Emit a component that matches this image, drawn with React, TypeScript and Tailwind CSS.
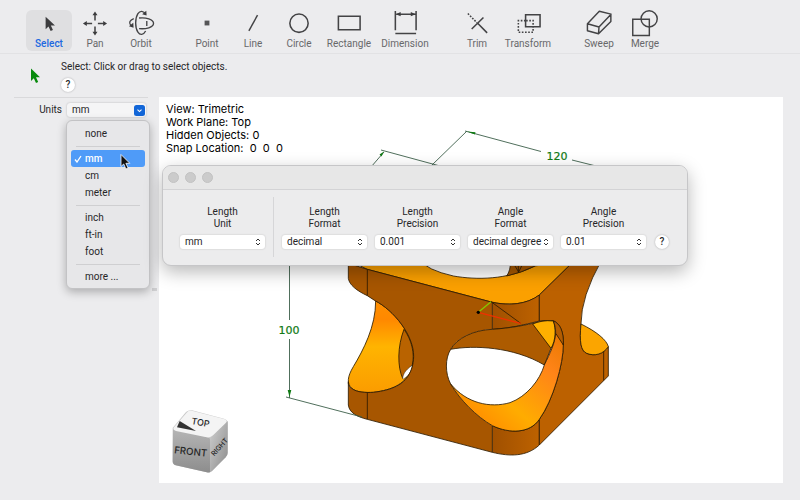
import React from 'react';

const ui = "font-['Roboto','Liberation_Sans',sans-serif]";

type Tool = { name: string; width: string; icon: React.ReactNode; active?: boolean };

const groups: Tool[][] = [
  [
    {
      name: 'Select',
      width: 'w-[46px]',
      active: true,
      icon: <path d="M10.500 7v13l3-2.800 2.200 4.600 2.400-1.100-2.200-4.500h4.300z" fill="#3c3c3e" stroke="none" />,
    },
    {
      name: 'Pan',
      width: 'w-[46px]',
      icon: (
        <>
          <path d="M14 3.500V11M14 17v7M3.500 14H11M17 14h7" strokeWidth="1.600" />
          <path
            d="M14 1.500l2.600 4h-5.200zM14 26.500l2.600-4h-5.200zM1.500 14l4-2.600v5.200zM26.500 14l-4-2.600v5.200z"
            fill="#3c3c3e"
            stroke="none"
          />
        </>
      ),
    },
    {
      name: 'Orbit',
      width: 'w-[46px]',
      icon: (
        <>
          <path d="M19 4.500C16.500 .5 13 .4 10.800 3.800C7.700 8.500 7.700 18.500 10.800 23C13 26.400 16.500 26.200 18.800 21.800" strokeWidth="1.400" />
          <path d="M12 8.300C19 7.500 27 9.500 27 13.800C27 18.200 19 20 12 19.300" strokeWidth="1.400" />
          <path d="M6.500 9C2.500 10.500 1 13 3.300 16" strokeWidth="1.400" />
          <path d="M19.500 .8l.3 5-4.600-1.300zM6 13.300l.3 5-4.800-1.400z" fill="#3c3c3e" stroke="none" />
          <path d="M20 11.500v5" strokeWidth="1.400" />
        </>
      ),
    },
  ],
  [
    { name: 'Point', width: 'w-[46px]', icon: <path d="M11.500 11h5v5h-5z" fill="#555557" stroke="none" /> },
    { name: 'Line', width: 'w-[46px]', icon: <path d="M9.700 21.700L18.700 5.300" strokeWidth="1.500" /> },
    { name: 'Circle', width: 'w-[46px]', icon: <circle cx="14" cy="13.700" r="9.500" /> },
    { name: 'Rectangle', width: 'w-[54px]', icon: <path d="M3 6.500h22.500v14H3z" /> },
    {
      name: 'Dimension',
      width: 'w-[58px]',
      icon: (
        <>
          <path d="M4 1v20M25.500 1v20M5 4.300h20M4 24.300h21.500" />
          <path d="M4.500 4.300l5-2.300v4.600zM25 4.300l-5-2.300v4.600z" fill="#3c3c3e" stroke="none" />
        </>
      ),
    },
  ],
  [
    {
      name: 'Trim',
      width: 'w-[46px]',
      icon: (
        <>
          <path d="M4.500 3.700L14 13.200" strokeDasharray="1.800 1.400" />
          <path d="M14.700 13.700L24.500 23.700M8.500 19.700L20.700 7.700" />
        </>
      ),
    },
    {
      name: 'Transform',
      width: 'w-[56px]',
      icon: (
        <>
          <path d="M11.500 5h15v12.300h-15z" />
          <path d="M11.500 11H4v12h15.300v-6" strokeDasharray="1.700 1.600" />
          <path d="M12 11h7.300v6.300" strokeDasharray="1.700 1.600" />
        </>
      ),
    },
  ],
  [
    {
      name: 'Sweep',
      width: 'w-[46px]',
      icon: (
        <path
          d="M2 14.300L14.300 1.300L26.500 4.300L14 17.700zM2 14.300v7.200L13.500 24.700L26.300 12V4.300M14 17.700l-.5 7"
          strokeLinejoin="round"
          strokeWidth="1.500"
        />
      ),
    },
    {
      name: 'Merge',
      width: 'w-[46px]',
      icon: (
        <>
          <path d="M1.300 9.500h17.200v17H1.300z" strokeWidth="1.500" />
          <circle cx="18.300" cy="9.200" r="8.400" strokeWidth="1.500" />
        </>
      ),
    },
  ],
];

function Toolbar() {
  return (
    <header className="flex h-[54px] gap-5 border-b border-[#e2e2e4] pt-[10px] pl-[26px]">
      {groups.map((group, i) => (
        <div key={i} className="flex">
          {group.map((t) => (
            <button
              key={t.name}
              type="button"
              className={`flex h-[41px] flex-col items-center justify-start rounded-md ${t.width} ${
                t.active ? 'bg-[#dfdfe1] text-[#2068e0] font-medium' : 'text-[#68686a]'
              }`}
            >
              <svg width="28" height="28" viewBox="0 0 28 28" fill="none" stroke="#434345" strokeWidth="1.600" aria-hidden="true">
                {t.icon}
              </svg>
              <span className="text-[10px] leading-[14px]">{t.name}</span>
            </button>
          ))}
        </div>
      ))}
    </header>
  );
}

function HelpButton() {
  return (
    <button
      type="button"
      aria-label="Help"
      className="flex size-[14px] shrink-0 items-center justify-center rounded-full bg-white text-[10px] leading-none font-medium text-[#2a2a2c] shadow-[0_0_2px_rgba(0,0,0,0.3)]"
    >
      ?
    </button>
  );
}

const unitGroups = [['none'], ['mm', 'cm', 'meter'], ['inch', 'ft-in', 'foot'], ['more ...']];

function UnitsField() {
  return (
    <div className="relative ml-[14px] mr-[11px] flex items-center border-t border-[#d9d9db] pt-[4px]">
      <label htmlFor="units" className="w-[53px] pr-[5px] text-right text-[10px]">
        Units
      </label>
      <div className="relative flex-1 pr-[2px]">
        <select
          id="units"
          defaultValue="mm"
          className="block h-[14px] w-full appearance-none rounded-[3px] bg-[#f5f5f6] pl-[5px] text-[10px] leading-[14px] shadow-[0_0_2px_rgba(0,0,0,0.25)]"
        >
          {unitGroups.flat().map((u) => (
            <option key={u}>{u}</option>
          ))}
        </select>
        <svg className="pointer-events-none absolute top-[2px] right-[3px]" width="11" height="11" viewBox="0 0 11 11" aria-hidden="true">
          <rect width="11" height="11" rx="2.500" fill="#1266d8" />
          <path d="M3.500 4.700L5.500 6.600L7.500 4.700" fill="none" stroke="#fff" strokeWidth="1.100" />
        </svg>
      </div>
      <div
        role="listbox"
        aria-label="Units"
        className="absolute top-[22px] left-[52px] z-10 w-[84px] rounded-md border border-[#c3c3c5] bg-[#e7e7e9] p-[4px] pb-[3px] text-[10px] shadow-[0_3px_10px_rgba(0,0,0,0.28)]"
      >
        {unitGroups.map((group, i) => (
          <div key={i}>
            {i > 0 && (
              <div className="flex h-2 items-center px-[5px]">
                <div className="h-px w-full bg-[#cfcfd1]" />
              </div>
            )}
            {group.map((u) => (
              <button
                key={u}
                type="button"
                role="option"
                aria-selected={u === 'mm'}
                className={`flex h-[17px] w-full items-center rounded-[3px] text-left leading-none ${
                  u === 'mm' ? 'bg-[#4f9bf8] font-medium text-white' : ''
                }`}
              >
                <span className="flex w-[14px] justify-center">
                  {u === 'mm' && (
                    <svg width="8" height="8" viewBox="0 0 8 8" fill="none" stroke="#fff" strokeWidth="1.300" aria-hidden="true">
                      <path d="M1 4.500L3 7L7 1" />
                    </svg>
                  )}
                </span>
                {u}
              </button>
            ))}
          </div>
        ))}
        <svg className="absolute top-[32px] left-[53px]" width="11" height="18" viewBox="0 0 11 18" aria-hidden="true">
          <path d="M1 1.500v12l2.700-2.500 2.200 5 2.200-1-2.200-4.700h3.900z" fill="#111" stroke="#fff" strokeWidth=".8" />
        </svg>
      </div>
    </div>
  );
}

function Model() {
  return (
    <svg
      className="absolute top-0 left-0"
      width="624"
      height="386"
      viewBox="159 97 624 386"
      role="img"
      aria-label="Trimetric view of the part"
    >
      <defs>
        <linearGradient id="leftBore" x1="0" y1="0" x2="0" y2="1">
          <stop offset="0" stopColor="#ff9000" />
          <stop offset=".2" stopColor="#ff8800" />
          <stop offset=".5" stopColor="#ffb400" />
          <stop offset="1" stopColor="#fb9c00" />
        </linearGradient>
        <linearGradient id="frontBore" x1="0" y1="1" x2="1" y2="0">
          <stop offset="0" stopColor="#ff7800" />
          <stop offset=".4" stopColor="#ffac00" />
          <stop offset=".75" stopColor="#ff8418" />
          <stop offset="1" stopColor="#e87800" />
        </linearGradient>
        <linearGradient id="corner">
          <stop offset="0" stopColor="#a05000" />
          <stop offset="1" stopColor="#bd6200" />
        </linearGradient>
        <linearGradient id="cubeFront" x1="0" y1="0" x2="0" y2="1">
          <stop offset="0" stopColor="#b5b5b5" />
          <stop offset="1" stopColor="#8d8d8d" />
        </linearGradient>
        <linearGradient id="cubeRight" x1="0" y1="0" x2="1" y2="1">
          <stop offset="0" stopColor="#d0d0d0" />
          <stop offset="1" stopColor="#8a8a8a" />
        </linearGradient>
      </defs>

      <g transform="translate(260 250) scale(.33333)" stroke="#2d1a00" strokeWidth="2.500" strokeLinejoin="round">
        {/* top face */}
        <path d="M265 30L480 30Q500 60 580 78C650 90 740 90 825 48L945 30L838 135C800 165 740 168 690 155L322 58z" fill="#fba000" />
        <path d="M752 30Q752 62 740 78Q785 68 825 48V30z" fill="#a85800" />
        <path d="M775 40V68M765 48L776 66L785 48" fill="none" />
        {/* bore behind the left wall */}
        <path
          d="M347 153C347 230 310 300 280 350C262 380 260 400 275 415C290 428 320 428 340 427C400 420 430 400 446 375C455 360 460 345 461 320C462 255 400 180 347 153z"
          fill="url(#leftBore)"
        />
        <path d="M432 238C412 290 412 350 428 385L457 345C465 310 455 270 432 238z" fill="#b96300" />
        <path d="M428 385C430 365 445 355 457 345C455 365 444 380 430 387z" fill="#fff" strokeWidth="1.500" />
        {/* front wall with its opening */}
        <path
          stroke="none"
          fill="#a75600"
          d="M265 40L322 58L697 157V238C640 240 590 265 572 298C555 325 555 370 572 402C600 450 650 500 697 527V607L322 508C290 500 268 488 265 465V395C264 408 270 412 275 415C290 428 320 428 340 427C400 420 430 402 446 375C455 360 460 345 461 320C462 255 400 180 345 152L322 137C290 122 268 105 265 85z"
        />
        <path
          fill="none"
          d="M697 607L322 508C290 500 268 488 265 465V395C264 408 270 412 275 415C290 428 320 428 340 427C400 420 430 402 446 375C455 360 460 345 461 320C462 255 400 180 345 152L322 137C290 122 268 105 265 85V40L322 58L697 157"
        />
        {/* rounded corner */}
        <path d="M697 157C750 168 800 163 838 135V213C790 225 750 235 697 238z" fill="url(#corner)" />
        <path d="M697 527C750 552 810 550 838 508V585C800 620 750 620 697 607z" fill="url(#corner)" />
        {/* right wall */}
        <path
          d="M838 135L945 30H1025Q963 140 963 222C958 275 962 302 980 310C1005 320 1030 312 1045 290V378L838 585V508C880 450 910 340 910 285C912 240 895 215 878 212Q858 211 838 213z"
          fill="#bc6100"
        />
        <path d="M963 222C1010 245 1040 270 1045 290C1030 312 1005 320 980 310C962 302 958 275 963 222z" fill="#fba500" />
        <path d="M1031 306V391" />
        {/* inside of the front opening */}
        <path d="M697 238C640 240 590 265 572 298C640 285 760 290 853 345L873 295C888 270 888 235 878 212C840 208 810 230 697 238z" fill="#ad5b00" />
        <path d="M572 402C620 460 690 475 750 458C800 440 840 390 853 345C870 310 885 280 887 250C900 262 908 275 910 285C910 340 880 450 838 508C810 550 750 552 697 527C650 500 600 450 572 402z" fill="url(#frontBore)" />
        <path d="M572 298C555 325 555 370 572 402" fill="none" />
        <path d="M818 222L873 295C888 270 888 235 880 213C855 210 835 215 818 222z" fill="#ffb000" />
        <path d="M880 213C900 220 912 245 910 285L887 250C887 235 885 225 880 213z" fill="#b35c00" />
        <path d="M693 155L782 220" fill="none" />
        <path d="M655 187L693 155" stroke="#86c800" strokeWidth="4" />
        <path d="M655 187L782 220" stroke="#f03000" strokeWidth="3.500" />
        <circle cx="655" cy="187" r="5" fill="#000" stroke="none" />
        <path d="M322 58V137M322 427V508" />
      </g>

      <g stroke="#3c5f4a" strokeWidth=".9" fill="none">
        <path d="M289.500 250V320M289.500 339V398M286 397L362 417M371 167L384 152M381 150L440 166M432 165L467 131M465 131L541 151.500M572 160L596 166" />
      </g>
      <g fill="#107a14">
        <path d="M289.500 397l-1.800-7h3.600zM384 151.500l-4.500 3 2 2zM467 131.500l8.500.8-.6 2.200z" />
        <g fontFamily="'DejaVu Sans', sans-serif" fontSize="11" textAnchor="middle" stroke="#107a14" strokeWidth=".2">
          <text x="289" y="334">100</text>
          <text x="557" y="160">120</text>
        </g>
      </g>

      {/* view cube */}
      <g transform="translate(140 390) scale(.33333)">
        <path d="M98 114L138 66Q146 59 156 61L252 86Q263 89 263 98V188Q263 196 257 202L216 243Q210 249 200 247L107 226Q98 223 98 214z" fill="#c9c9c9" />
        <path d="M99 118L204 142Q211 144 211 152V246Q206 249 200 247L107 226Q98 223 98 214z" fill="url(#cubeFront)" />
        <path d="M211 144L263 93V188Q263 196 257 202L216 243L211 246z" fill="url(#cubeRight)" />
        <path d="M102 112L140 68Q146 60 156 62L252 87Q265 91 257 99L219 136Q211 144 200 142L108 123Q97 120 102 112z" fill="#f4f4f4" />
        <path d="M119 93L168 123L111 112z" fill="#333" />
        <g fontFamily="Inter, 'Liberation Sans', sans-serif" textAnchor="middle" fill="#262626" fontWeight="500">
          <text transform="translate(180 107) rotate(10)" fontSize="27">TOP</text>
          <text transform="translate(151 195) rotate(6)" fontSize="29">FRONT</text>
          <text transform="translate(244 176) rotate(-48)" fontSize="21">RIGHT</text>
        </g>
      </g>
    </svg>
  );
}

type Field = { id: string; top: string; bottom: string; value: string };

const unitField: Field = { id: 'length-unit', top: 'Length', bottom: 'Unit', value: 'mm' };
const formatFields: Field[] = [
  { id: 'length-format', top: 'Length', bottom: 'Format', value: 'decimal' },
  { id: 'length-precision', top: 'Length', bottom: 'Precision', value: '0.001' },
  { id: 'angle-format', top: 'Angle', bottom: 'Format', value: 'decimal degree' },
  { id: 'angle-precision', top: 'Angle', bottom: 'Precision', value: '0.01' },
];

function FormatField({ id, top, bottom, value }: Field) {
  return (
    <div className="flex w-[85px] flex-col">
      <label htmlFor={id} className="pb-[5px] text-center text-[10px] leading-3">
        {top}
        <br />
        {bottom}
      </label>
      <div className="relative">
        <select
          id={id}
          defaultValue={value}
          className="block h-[14px] w-full appearance-none rounded-[3px] bg-white pl-[5px] text-[10px] leading-[14px] shadow-[0_0_2px_rgba(0,0,0,0.2)]"
        >
          <option>{value}</option>
        </select>
        <svg className="pointer-events-none absolute top-[3px] right-1" width="6" height="8" viewBox="0 0 6 8" fill="none" stroke="#333" aria-hidden="true">
          <path d="M1 3L3 1L5 3M1 5L3 7L5 5" />
        </svg>
      </div>
    </div>
  );
}

function UnitsWindow() {
  return (
    <section
      aria-label="Units and precision"
      className="absolute top-[165px] left-[162px] z-20 w-[526px] rounded-[9px] border border-[#c6c6c8] bg-[#ececed] shadow-[0_6px_18px_rgba(0,0,0,0.28)]"
    >
      <div className="flex h-6 items-center gap-[6px] rounded-t-[8px] border-b border-[#d3d3d5] bg-[#e7e7e7] pl-[5px]">
        {['Close', 'Minimize', 'Zoom'].map((n) => (
          <button key={n} type="button" aria-label={n} className="size-[11px] rounded-full border border-[#c2c2c2] bg-[#cbcbcb]" />
        ))}
      </div>
      <div className="flex px-[17px] pt-[7px] pb-2">
        <div className="pt-[9px] pr-[8px]">
          <FormatField {...unitField} />
        </div>
        <div className="h-[60px] w-px bg-[#d6d6d8]" />
        <div className="flex gap-2 pt-[9px] pl-2">
          {formatFields.map((f) => (
            <FormatField key={f.id} {...f} />
          ))}
        </div>
        <div className="pt-[38px] pl-[9px]">
          <HelpButton />
        </div>
      </div>
    </section>
  );
}

export default function App() {
  return (
    <div className={`relative flex min-h-screen flex-col bg-[#ececee] text-[#262628] ${ui}`}>
      <Toolbar />
      <div className="flex h-[43px] pt-[7px]">
        <svg className="mt-[7px] ml-[30px]" width="11" height="16" viewBox="0 0 11 16" aria-hidden="true">
          <path d="M1 .5v12.500l2.800-2.700 2.200 4.700 2.200-1-2.200-4.700h4z" fill="#078a0c" />
        </svg>
        <div className="pl-5">
          <p className="text-[10px] leading-3">Select: Click or drag to select objects.</p>
          <div className="pt-[5px]">
            <HelpButton />
          </div>
        </div>
      </div>
      <div className="flex flex-1">
        <aside className="relative w-[159px] shrink-0">
          <UnitsField />
          <div className="absolute top-[191px] right-[2px] h-[3px] w-[5px] bg-[#d0d0d2]" />
        </aside>
        <main className="relative mr-[17px] mb-[17px] flex-1 overflow-hidden bg-white">
          <Model />
          <div className="relative pt-[6px] pl-[7px] font-['Inter','Liberation_Sans',sans-serif] text-[11px] leading-[13px] whitespace-pre text-black">
            <p>View: Trimetric</p>
            <p>Work Plane: Top</p>
            <p>Hidden Objects: 0</p>
            <p>Snap Location:{'  '}0{'  '}0{'  '}0</p>
          </div>
        </main>
      </div>
      <UnitsWindow />
    </div>
  );
}
